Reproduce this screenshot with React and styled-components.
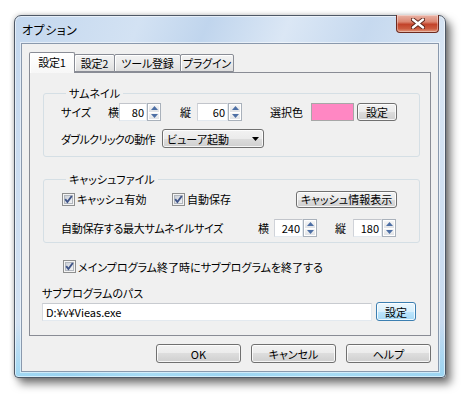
import React from 'react';
import styled, { createGlobalStyle } from 'styled-components';

const Global = createGlobalStyle`
  html, body { margin: 0; padding: 0; background: #ffffff; }
  body {
    font-family: "Noto Sans CJK JP", "Noto Sans", sans-serif;
    font-size: 11px;
    color: #000;
    font-feature-settings: "palt";
  }
  * { box-sizing: border-box; }
  #root { width: 465px; height: 397px; overflow: hidden; }
`;

const Desktop = styled.div`
  padding: 15px 0 0 14px;
  width: 465px;
  height: 397px;
`;

const Window = styled.div`
  width: 432px;
  height: 363px;
  border: 1px solid #4e5866;
  border-radius: 7px 7px 4px 4px;
  background:
    linear-gradient(180deg, rgba(255,255,255,0) 85%, rgba(120,210,245,0.55) 100%),
    linear-gradient(112deg, #c3d7ee 0%, #d3e2f3 22%, #c0d5ed 34%, #dbe7f5 48%, #c6d9ef 62%, #d9e6f4 78%, #c4d8ef 100%);
  box-shadow: 0 0 5px rgba(0,0,0,0.25), 5px 6px 9px rgba(0,0,0,0.5), inset 0 0 0 1px rgba(255,255,255,0.55);
  display: flex;
  flex-direction: column;
`;

const TitleBar = styled.div`
  height: 27px;
  display: flex;
  align-items: center;
  padding-left: 7px;
`;

const Title = styled.div`
  font-size: 12px;
  line-height: 14px;
  color: #000;
  letter-spacing: 0.5px;
`;

const CloseButton = styled.div`
  margin-left: auto;
  margin-right: 6px;
  align-self: flex-start;
  margin-top: -1px;
  width: 43px;
  height: 18px;
  border: 1px solid #6d2a1f;
  border-top: none;
  border-radius: 0 0 4px 4px;
  background: linear-gradient(180deg, #e9b3a6 0%, #dc8772 40%, #c2432a 55%, #cc5b3f 80%, #e29a7e 100%);
  box-shadow: inset 0 0 0 1px rgba(255,255,255,0.35);
  display: flex;
  align-items: center;
  justify-content: center;
`;

const Client = styled.div`
  flex: 1;
  margin: 0 6px 5px 6px;
  background: #f0f0f0;
  border: 1px solid #8a99ad;
  box-shadow: 0 0 0 1px rgba(255,255,255,0.5);
  padding: 8px 7px 0 7px;
  display: flex;
  flex-direction: column;
`;

const TabStrip = styled.div`
  height: 20px;
  display: flex;
  align-items: flex-end;
`;

const Tab = styled.div`
  position: relative;
  width: ${p => p.$w}px;
  height: ${p => (p.$active ? 21 : 18)}px;
  margin-bottom: ${p => (p.$active ? -1 : 0)}px;
  margin-left: ${p => (p.$first ? 0 : -1)}px;
  z-index: ${p => (p.$active ? 2 : 1)};
  border: 1px solid #898c95;
  border-bottom: ${p => (p.$active ? 'none' : '1px solid #898c95')};
  border-radius: 2px 2px 0 0;
  background: ${p => (p.$active
    ? 'linear-gradient(180deg, #ffffff, #f7f7f7)'
    : 'linear-gradient(180deg, #f3f3f3 0%, #ebebeb 50%, #dedede 100%)')};
  box-shadow: inset 1px 1px 0 #ffffff;
  text-align: center;
  line-height: ${p => (p.$active ? 19 : 16)}px;
  letter-spacing: -0.2px;
  white-space: nowrap;
  overflow: hidden;
`;

const Panel = styled.div`
  height: 264px;
  border: 1px solid #898c95;
  background: #f0f0f0;
  display: flex;
  flex-direction: column;
`;

const Group = styled.fieldset`
  margin: ${p => p.$mt}px 10px 0 13px;
  padding: ${p => p.$pt}px 0 ${p => p.$pb}px 17px;
  border: 1px solid #d5dfe5;
  border-radius: 3px;
  min-inline-size: 0;
  display: flex;
  flex-direction: column;
`;

const Legend = styled.legend`
  margin-left: 5px;
  padding: 0 3px;
  line-height: 14px;
`;

const Row = styled.div`
  display: flex;
  align-items: center;
  height: ${p => p.$h || 18}px;
  margin-top: ${p => p.$mt || 0}px;
  padding-left: ${p => p.$pl || 0}px;
  white-space: nowrap;
`;

const Label = styled.span`
  display: inline-block;
  width: ${p => (p.$w ? `${p.$w}px` : 'auto')};
  margin-left: ${p => p.$ml || 0}px;
  line-height: 14px;
  letter-spacing: ${p => p.$ls || 0}px;
  white-space: nowrap;
  flex: none;
`;

const SpinWrap = styled.div`
  display: flex;
  flex: none;
  width: ${p => p.$w}px;
  height: 18px;
`;

const SpinEdit = styled.div`
  flex: 1;
  background: #ffffff;
  border: 1px solid;
  border-color: #c2c5cb #e3e9ef #e3e9ef #d0d3d9;
  text-align: right;
  padding-right: 2px;
  line-height: 16px;
`;

const SpinBtns = styled.div`
  width: 14px;
  display: flex;
  flex-direction: column;
  border: 1px solid #a9b1bb;
  background: #ffffff;
`;

const SpinBtn = styled.div`
  flex: 1;
  display: flex;
  align-items: center;
  justify-content: center;
  background: linear-gradient(180deg, #f6f6f6, #e1e3e6);
  border: 1px solid #ffffff;
  border-top-width: ${p => (p.$down ? 0 : 1)}px;
`;

const Button = styled.div`
  flex: none;
  width: ${p => p.$w}px;
  height: ${p => p.$h || 19}px;
  margin-left: ${p => p.$ml || 0}px;
  border: 1px solid ${p => (p.$focus ? '#3c7fb1' : '#707070')};
  border-radius: 3px;
  background: ${p => (p.$focus
    ? 'linear-gradient(180deg, #eaf6fd 0%, #d9f0fc 50%, #bee6fd 50%, #a7d9f5 100%)'
    : 'linear-gradient(180deg, #f2f2f2 0%, #ebebeb 50%, #dddddd 50%, #cfcfcf 100%)')};
  box-shadow: inset 0 0 0 1px rgba(255,255,255,0.8);
  display: flex;
  align-items: center;
  justify-content: center;
  line-height: 14px;
  white-space: nowrap;
`;

const Swatch = styled.div`
  flex: none;
  width: 43px;
  height: 18px;
  background: #ff87c3;
  border: 1px solid #a7a7a7;
`;

const Combo = styled.div`
  flex: none;
  width: 102px;
  height: 19px;
  border: 1px solid #707070;
  border-radius: 3px;
  background: linear-gradient(180deg, #f2f2f2 0%, #ebebeb 50%, #dddddd 50%, #cfcfcf 100%);
  box-shadow: inset 0 0 0 1px rgba(255,255,255,0.8);
  display: flex;
  align-items: center;
  padding: 0 4px 0 4px;
  line-height: 14px;
`;

const ComboText = styled.span`
  flex: 1;
`;

const CheckItem = styled.label`
  display: flex;
  align-items: center;
  flex: none;
  width: ${p => (p.$w ? `${p.$w}px` : 'auto')};
  margin-left: ${p => p.$ml || 0}px;
  gap: 2px;
  line-height: 14px;
  white-space: nowrap;
`;

const PathLabel = styled.div`
  margin-top: 11px;
  padding-left: 12px;
  line-height: 14px;
`;

const PathInput = styled.div`
  flex: none;
  width: 330px;
  height: 18px;
  background: #ffffff;
  border: 1px solid;
  border-color: #c8cbd0 #e3e9ef #e3e9ef #d5d8dd;
  padding-left: 3px;
  line-height: 16px;
`;

const ButtonBar = styled.div`
  margin-top: 8px;
  display: flex;
  justify-content: flex-end;
  gap: 10px;
`;

const CheckBox = () => (
  <svg width="13" height="13" viewBox="0 0 13 13" style={{ flex: 'none' }}>
    <defs>
      <linearGradient id="cbIn" x1="0" y1="0" x2="1" y2="1">
        <stop offset="0" stopColor="#c9ced6" />
        <stop offset="1" stopColor="#f5f6f7" />
      </linearGradient>
    </defs>
    <rect x="0.5" y="0.5" width="12" height="12" fill="#f4f4f4" stroke="#8e8f8f" />
    <rect x="2.5" y="2.5" width="8" height="8" fill="url(#cbIn)" stroke="#b2b7be" />
    <path d="M3.2 6.2 L5.4 9 L9.8 3" stroke="#3f5488" strokeWidth="1.9" fill="none" />
  </svg>
);

const Arrow = ({ down }) => (
  <svg width="7" height="4" viewBox="0 0 7 4">
    <path d={down ? 'M0 0 L7 0 L3.5 4 Z' : 'M0 4 L7 4 L3.5 0 Z'} fill="#4d6fa5" />
  </svg>
);

const Spin = ({ value, w }) => (
  <SpinWrap $w={w}>
    <SpinEdit>{value}</SpinEdit>
    <SpinBtns>
      <SpinBtn><Arrow /></SpinBtn>
      <SpinBtn $down><Arrow down /></SpinBtn>
    </SpinBtns>
  </SpinWrap>
);

const CloseGlyph = () => (
  <svg width="14" height="11" viewBox="0 0 14 11">
    <path d="M2 1.5 L12 9.5 M12 1.5 L2 9.5" stroke="#5a2318" strokeWidth="4.2" strokeLinecap="round" />
    <path d="M2 1.5 L12 9.5 M12 1.5 L2 9.5" stroke="#ffffff" strokeWidth="2.4" strokeLinecap="round" />
  </svg>
);

export default function App() {
  return (
    <>
      <Global />
      <Desktop>
        <Window>
          <TitleBar>
            <Title>オプション</Title>
            <CloseButton><CloseGlyph /></CloseButton>
          </TitleBar>
          <Client>
            <TabStrip>
              <Tab $active $first $w={46}>設定1</Tab>
              <Tab $w={41}>設定2</Tab>
              <Tab $w={67}>ツール登録</Tab>
              <Tab $w={54}>プラグイン</Tab>
            </TabStrip>
            <Panel>
              <Group $mt={13} $pt={3} $pb={8}>
                <Legend>サムネイル</Legend>
                <Row>
                  <Label $w={47}>サイズ</Label>
                  <Label $w={11}>横</Label>
                  <Spin value="80" w={42} />
                  <Label $w={17} $ml={19}>縦</Label>
                  <Spin value="60" w={45} />
                  <Label $w={41} $ml={28}>選択色</Label>
                  <Swatch />
                  <Button $w={40} $h={18} $ml={3}>設定</Button>
                </Row>
                <Row $h={19} $mt={8}>
                  <Label $w={101} $ls={-0.6}>ダブルクリックの動作</Label>
                  <Combo>
                    <ComboText>ビューア起動</ComboText>
                    <svg width="7" height="4" viewBox="0 0 7 4"><path d="M0 0 L7 0 L3.5 4 Z" fill="#000" /></svg>
                  </Combo>
                </Row>
              </Group>
              <Group $mt={15} $pt={4} $pb={5}>
                <Legend>キャッシュファイル</Legend>
                <Row>
                  <CheckItem $w={110} $ml={1}><CheckBox />キャッシュ有効</CheckItem>
                  <CheckItem $w={124}><CheckBox />自動保存</CheckItem>
                  <Button $w={101} $h={17}>キャッシュ情報表示</Button>
                </Row>
                <Row $mt={11}>
                  <Label $w={197} $ls={-0.3}>自動保存する最大サムネイルサイズ</Label>
                  <Label $w={16}>横</Label>
                  <Spin value="240" w={43} />
                  <Label $w={18} $ml={18}>縦</Label>
                  <Spin value="180" w={43} />
                </Row>
              </Group>
              <Row $h={17} $mt={15} $pl={33}>
                <CheckItem><CheckBox />メインプログラム終了時にサブプログラムを終了する</CheckItem>
              </Row>
              <PathLabel>サブプログラムのパス</PathLabel>
              <Row $h={19} $mt={2} $pl={12}>
                <PathInput>D:¥v¥Vieas.exe</PathInput>
                <Button $w={40} $ml={4} $focus>設定</Button>
              </Row>
            </Panel>
            <ButtonBar>
              <Button $w={85}>OK</Button>
              <Button $w={85}>キャンセル</Button>
              <Button $w={85}>ヘルプ</Button>
            </ButtonBar>
          </Client>
        </Window>
      </Desktop>
    </>
  );
}
